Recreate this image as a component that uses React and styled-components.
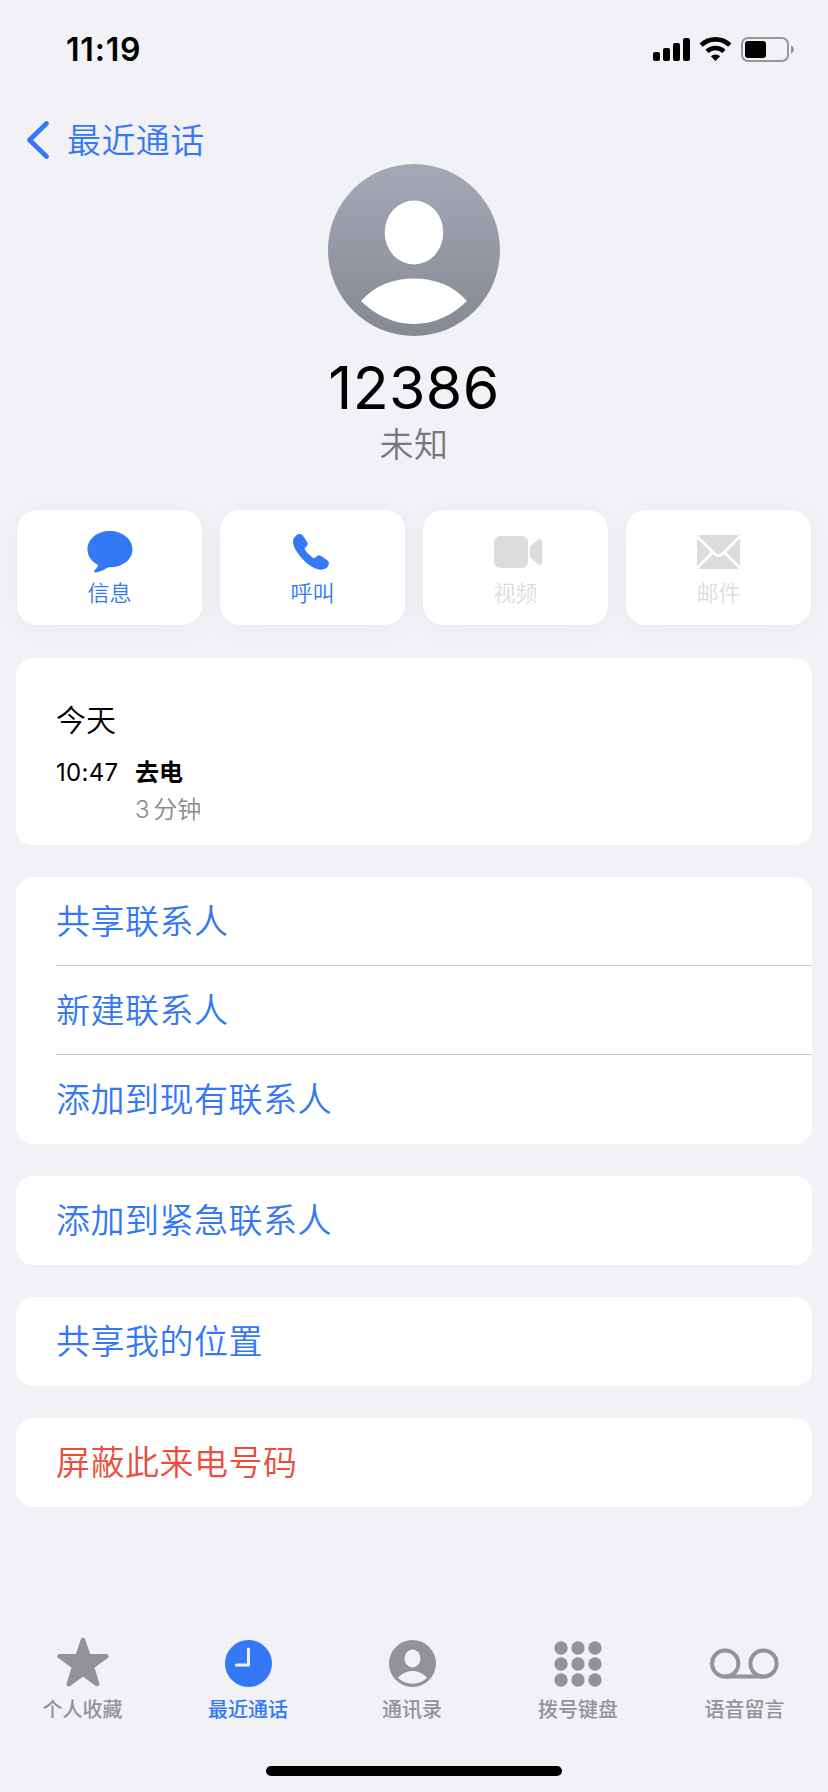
import React from 'react';
import styled, { createGlobalStyle } from 'styled-components';

const BLUE = '#3478f6';
const GRAY = '#929299';
const DISABLED = '#dcdcde';

const GlobalStyle = createGlobalStyle`
  body { margin: 0; background: #f1f1f6; }
  *, *::before, *::after { box-sizing: border-box; }
  svg { display: block; }
`;

const Screen = styled.div`
  width: 828px;
  height: 1792px;
  display: flex;
  flex-direction: column;
  background: #f1f1f6;
  color: #000;
  font-family: Inter, 'Noto Sans CJK SC', sans-serif;
  overflow: hidden;
`;

const StatusBar = styled.header`
  height: 100px;
  flex: none;
  display: flex;
  align-items: center;
  justify-content: space-between;
  padding: 0 34px 0 66px;
`;

const Clock = styled.span`
  font-size: 32px;
  font-weight: 600;
  line-height: 40px;
  letter-spacing: 0.8px;
`;

const BackButton = styled.button`
  height: 64px;
  flex: none;
  align-self: flex-start;
  display: flex;
  align-items: center;
  gap: 17px;
  margin-top: 8px;
  padding: 0 0 0 26px;
  border: 0;
  background: none;
  color: ${BLUE};
  font: inherit;
  font-size: 34px;
  font-weight: 350;
  line-height: 48px;
  letter-spacing: 0.4px;
  margin-bottom: -8px;
`;

const BackLabel = styled.span`
  padding-top: 2px;
`;

const Profile = styled.section`
  flex: none;
  display: flex;
  flex-direction: column;
  align-items: center;
`;

const PhoneNumber = styled.h1`
  margin: 16px 0 0;
  font-size: 59px;
  font-weight: 400;
  line-height: 72px;
  letter-spacing: 0.4px;
`;

const Subtitle = styled.p`
  margin: -3px 0 0;
  color: #77777b;
  font-size: 34px;
  font-weight: 350;
  line-height: 48px;
  letter-spacing: 0.5px;
`;

const Actions = styled.div`
  flex: none;
  display: grid;
  grid-template-columns: repeat(4, 185px);
  gap: 18px;
  margin: 41px 0 0 17px;
`;

const ActionCard = styled.button`
  height: 115px;
  display: flex;
  flex-direction: column;
  align-items: center;
  gap: 1px;
  padding: 18px 0 0;
  border: 0;
  border-radius: 20px;
  background: #fff;
  box-shadow: 0 4px 28px rgba(0, 0, 0, 0.04);
  color: ${(p) => (p.$disabled ? DISABLED : BLUE)};
  font: inherit;
  font-size: 22px;
  font-weight: 350;
  line-height: 32px;
`;

const ActionIcon = styled.span`
  height: 48px;
  display: flex;
  align-items: center;
`;

const Groups = styled.main`
  position: relative;
  display: flex;
  flex-direction: column;
  gap: 32px;
  margin: 33px 16px 0;
`;

const Group = styled.section`
  flex: none;
  border-radius: 17px;
  background: #fff;
  overflow: hidden;
`;

const History = styled(Group)`
  height: 187px;
  padding: 42px 40px 0;
`;

const Day = styled.h2`
  margin: 0 0 14px;
  font-size: 30px;
  font-weight: 350;
  line-height: 40px;
`;

const CallGrid = styled.div`
  display: grid;
  grid-template-columns: 79px auto;
  justify-content: start;
  grid-auto-rows: 37px;
  font-size: 24px;
  line-height: 37px;
`;

const CallTime = styled.span`
  letter-spacing: 0.3px;
`;

const CallType = styled.span`
  font-weight: 700;
`;

const Duration = styled.span`
  grid-column: 2;
  color: #8a8a8e;
  font-weight: 350;
  word-spacing: -3px;
`;

const Row = styled.div`
  height: 89px;
  margin-left: 40px;
  padding-top: 2px;
  display: flex;
  align-items: center;
  border-bottom: 1px solid #c6c6c8;
  color: ${(p) => (p.$danger ? '#eb4e3d' : BLUE)};
  font-size: 34px;
  font-weight: 350;
  line-height: 48px;
  letter-spacing: 0.5px;

  &:last-child { border-bottom-color: transparent; }
`;

const TabBar = styled.nav`
  flex: none;
  display: grid;
  grid-template-columns: 165px 166px 162px 170px 163px;
  margin-top: auto;
  height: 158px;
`;

const Tab = styled.div`
  display: flex;
  flex-direction: column;
  align-items: center;
  gap: 2px;
  color: ${(p) => (p.$active ? BLUE : GRAY)};
  font-size: 20px;
  font-weight: 500;
  line-height: 30px;
`;

const TabIcon = styled.span`
  height: 59px;
  display: flex;
  align-items: center;
`;

const HomeIndicator = styled.div`
  flex: none;
  align-self: center;
  width: 296px;
  height: 10px;
  margin: -26px 0 16px;
  border-radius: 5px;
  background: #000;
`;

const StatusIcons = () => (
  <svg width="142" height="26" viewBox="652 37 142 26">
    <rect x="653" y="52" width="7" height="9" rx="2" />
    <rect x="663" y="48" width="7" height="13" rx="2" />
    <rect x="673" y="43" width="7" height="18" rx="2" />
    <rect x="683" y="38" width="7" height="23" rx="2" />
    <g fill="none" stroke="#000" strokeWidth="4.6">
      <path d="M701.2 45.2a20.5 20.5 0 0 1 28.6 0" />
      <path d="M707 51.4a12.3 12.3 0 0 1 17 0" />
    </g>
    <path d="M715.5 61l-4.6-4.7a6.6 6.6 0 0 1 9.2 0z" />
    <rect x="742" y="38" width="46" height="23" rx="6" fill="none" stroke="#97979b" strokeWidth="2" />
    <rect x="745" y="41" width="21" height="17" rx="3" />
    <path d="M791 45.5c4 1.5 4 6.500 0 8z" fill="#97979b" />
  </svg>
);

const BackIcon = () => (
  <svg width="24" height="40" viewBox="0 0 24 40" fill="none" stroke="currentColor" strokeWidth="4.8" strokeLinecap="round" strokeLinejoin="round">
    <path d="M20.500 3.500L3.500 20l17 16.500" />
  </svg>
);

const Avatar = () => (
  <svg width="172" height="172" viewBox="0 0 172 172">
    <defs>
      <linearGradient id="avatar" x1="0" y1="0" x2="0" y2="1">
        <stop offset="0" stopColor="#a5a9b7" />
        <stop offset="1" stopColor="#858991" />
      </linearGradient>
    </defs>
    <circle cx="86" cy="86" r="86" fill="url(#avatar)" />
    <ellipse cx="86" cy="68.500" rx="29.300" ry="32" fill="#fff" />
    <path d="M33 137C47 121 66 114.500 86 114.500S125 121 139 137C125 151 106 160 86 160S47 151 33 137z" fill="#fff" />
  </svg>
);

const BubbleIcon = () => (
  <svg width="46" height="42" viewBox="0.500 1 45.300 41" preserveAspectRatio="none" fill="currentColor">
    <path d="M23 1C10.600 1 1 8.700 1 19c0 6.200 3.700 11.600 9.700 14.600.8.400.9 1 .4 1.700-.8 1.300-2 2.900-3.300 4.200-.9 1-.3 2 1 1.900 4.500-.4 8.700-2.400 11.800-4.500.6-.4 1.200-.5 1.900-.5C35.400 36.600 45.300 29 45.300 19S35.400 1 23 1z" />
  </svg>
);

const PhoneIcon = () => (
  <svg width="41" height="38" viewBox="0 0 41 38" fill="currentColor">
    <path d="M4.100 2.400C6.700.4 9.300.6 10.900 2.800l4.100 5.900c1.100 1.700.9 3.100-.4 4.500l-1.500 1.600c-.5.6-.5 1.100-.1 1.800 1.700 3.100 5.300 6.700 8.300 8.400.7.400 1.200.3 1.700-.2l1.700-1.500c1.300-1.200 2.700-1.400 4.300-.4l6 4.100c2.300 1.600 2.500 4.300.5 6.900-5.700 6.100-15.400 1.100-22.500-5.500C5.500 21 1 13.500 1 8.700c0-2.500 1-4.500 3.100-6.300z" />
  </svg>
);

const VideoIcon = () => (
  <svg width="46" height="34" viewBox="0 0 46 34" fill="currentColor" overflow="visible">
    <rect x="1" y="1" width="34" height="32" rx="6" />
    <path d="M37 11.500l7.700-6.600c2.200-1.800 4.500-1 4.500 1.500v21c0 2.500-2.300 3.300-4.500 1.500L37 22.300z" />
  </svg>
);

const MailIcon = () => (
  <svg width="43" height="34" viewBox="0 0 43 34">
    <rect width="43" height="34" rx="3" fill="currentColor" />
    <path d="M0 1.500l17.500 17.200c2.500 2.600 5.500 2.600 8 0L43 1.500M0 33l15.500-15.500M43 33L27.500 17.500" fill="none" stroke="#fff" strokeWidth="2.800" />
  </svg>
);

const StarIcon = () => (
  <svg width="52" height="54" viewBox="0 0 52 54" fill="currentColor" stroke="currentColor" strokeWidth="4.500" strokeLinejoin="round">
    <path d="M26 3l5.500 16.200 17.900.1-14.400 10.500 5.200 17.300L26 36.900 11.800 47.100 17 29.800 2.600 19.300l17.900-.1z" />
  </svg>
);

const ClockIcon = () => (
  <svg width="47" height="47" viewBox="0 0 47 47">
    <circle cx="23.500" cy="23.500" r="23.500" fill="currentColor" />
    <path d="M23.500 9v16H11.500" fill="none" stroke="#f1f1f6" strokeWidth="3" strokeLinecap="round" strokeLinejoin="round" />
  </svg>
);

const ContactIcon = () => (
  <svg width="47" height="47" viewBox="0 0 47 47">
    <circle cx="23.500" cy="23.500" r="23.500" fill="currentColor" />
    <ellipse cx="23.500" cy="18.500" rx="8" ry="9" fill="#f1f1f6" />
    <path d="M9 38c3.500-4.700 9-7 14.500-7S34.500 33.300 38 38c-8 7.500-21 7.500-29 0z" fill="#f1f1f6" />
  </svg>
);

const KeypadIcon = () => (
  <svg width="48" height="46" viewBox="0 0 48 46" fill="currentColor">
    {[7, 23, 39].map((y) => [7, 24, 41].map((x) => (
      <circle key={`${x}-${y}`} cx={x} cy={y} r="6.700" />
    )))}
  </svg>
);

const VoicemailIcon = () => (
  <svg width="69" height="31" viewBox="0 0 69 31" fill="none" stroke="currentColor" strokeWidth="4">
    <circle cx="15.200" cy="15.500" r="13.100" />
    <circle cx="53.500" cy="15.500" r="13.100" />
    <path d="M15.200 28.600h38.300" />
  </svg>
);

const actions = [
  { label: '信息', Icon: BubbleIcon },
  { label: '呼叫', Icon: PhoneIcon },
  { label: '视频', Icon: VideoIcon, disabled: true },
  { label: '邮件', Icon: MailIcon, disabled: true },
];

const groups = [
  [{ label: '共享联系人' }, { label: '新建联系人' }, { label: '添加到现有联系人' }],
  [{ label: '添加到紧急联系人' }],
  [{ label: '共享我的位置' }],
  [{ label: '屏蔽此来电号码', danger: true }],
];

const tabs = [
  { label: '个人收藏', Icon: StarIcon },
  { label: '最近通话', Icon: ClockIcon, active: true },
  { label: '通讯录', Icon: ContactIcon },
  { label: '拨号键盘', Icon: KeypadIcon },
  { label: '语音留言', Icon: VoicemailIcon },
];

export default function App() {
  return (
    <Screen>
      <GlobalStyle />
      <StatusBar>
        <Clock>11:19</Clock>
        <StatusIcons />
      </StatusBar>
      <BackButton>
        <BackIcon />
        <BackLabel>最近通话</BackLabel>
      </BackButton>
      <Profile>
        <Avatar />
        <PhoneNumber>12386</PhoneNumber>
        <Subtitle>未知</Subtitle>
      </Profile>
      <Actions>
        {actions.map(({ label, Icon, disabled }) => (
          <ActionCard key={label} $disabled={disabled}>
            <ActionIcon><Icon /></ActionIcon>
            {label}
          </ActionCard>
        ))}
      </Actions>
      <Groups>
        <History>
          <Day>今天</Day>
          <CallGrid>
            <CallTime>10:47</CallTime>
            <CallType>去电</CallType>
            <Duration>3 分钟</Duration>
          </CallGrid>
        </History>
        {groups.map((rows) => (
          <Group key={rows[0].label}>
            {rows.map(({ label, danger }) => (
              <Row key={label} $danger={danger}>{label}</Row>
            ))}
          </Group>
        ))}
      </Groups>
      <TabBar>
        {tabs.map(({ label, Icon, active }) => (
          <Tab key={label} $active={active}>
            <TabIcon><Icon /></TabIcon>
            {label}
          </Tab>
        ))}
      </TabBar>
      <HomeIndicator />
    </Screen>
  );
}
